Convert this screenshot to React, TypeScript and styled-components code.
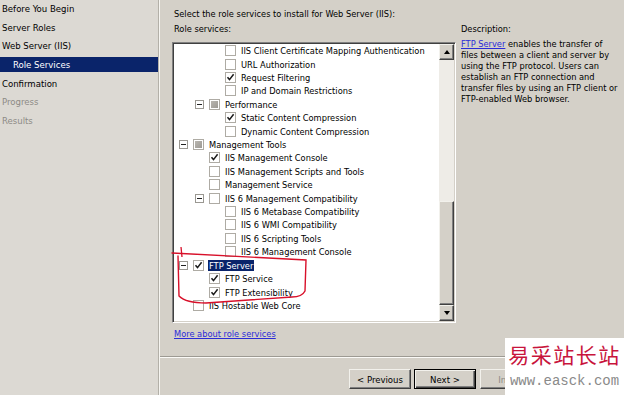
import React from "react";
import styled, { createGlobalStyle } from "styled-components";

// Add Role Services wizard page (classic Windows theme look)

const GlobalStyle = createGlobalStyle`
  html, body {
    margin: 0;
    padding: 0;
  }
  body {
    background: #d4d0c8;
    font-family: "DejaVu Sans Condensed", "Liberation Sans", sans-serif;
    font-size: 9.2px;
    color: #000;
  }
`;

const Wizard = styled.div`
  position: relative;
  width: 624px;
  height: 395px;
  display: flex;
  overflow: hidden;
  background: #d4d0c8;
`;

const Nav = styled.div`
  width: 158px;
  flex: none;
  padding-top: 1px;
  background: #dcd9d3;
  border-right: 1px solid #b3b0a8;
`;

const NavItem = styled.div<{ $sub?: boolean; $active?: boolean; $disabled?: boolean }>`
  height: 15px;
  line-height: 15px;
  margin-bottom: 3.7px;
  padding-left: ${(p) => (p.$sub ? 13 : 2)}px;
  font-size: 9.5px;
  white-space: nowrap;
  background: ${(p) => (p.$active ? "#0a246a" : "transparent")};
  color: ${(p) => (p.$active ? "#fff" : p.$disabled ? "#8d8b86" : "#000")};
`;

const Main = styled.div`
  flex: 1;
  display: flex;
  flex-direction: column;
  border-left: 1px solid #f6f5f1;
`;

const Body = styled.div`
  flex: 1;
  padding: 8px 0 0 12px;
`;

const Heading = styled.div`
  line-height: 12px;
  margin-left: 2px;
  white-space: nowrap;
`;

const Columns = styled.div`
  display: flex;
  margin-top: 3px;
`;

const LeftColumn = styled.div`
  width: 284px;
  flex: none;
`;

const RightColumn = styled.div`
  margin-left: 5px;
`;

const Label = styled.div<{ $indent?: number }>`
  line-height: 12px;
  margin-left: ${(p) => p.$indent ?? 0}px;
  white-space: nowrap;
`;

const ListBox = styled.div`
  margin-top: 7px;
  height: 281px;
  box-sizing: border-box;
  display: flex;
  padding: 1px;
  background: #fff;
  border: 1px solid;
  border-color: #808080 #ffffff #ffffff #808080;
  box-shadow: inset 1px 1px 0 #404040, inset -1px -1px 0 #d4d0c8;
`;

const Rows = styled.div`
  flex: 1;
  overflow: hidden;
`;

const Row = styled.div<{ $level: number }>`
  height: 13.42px;
  display: flex;
  align-items: center;
  padding-left: ${(p) => 5 + (p.$level - 1) * 16}px;
`;

const Expander = styled.span<{ $hidden?: boolean }>`
  position: relative;
  width: 9px;
  height: 9px;
  box-sizing: border-box;
  flex: none;
  margin-right: 5px;
  border: 1px solid #9a9892;
  background: #fff;
  visibility: ${(p) => (p.$hidden ? "hidden" : "visible")};
  &::after {
    content: "";
    position: absolute;
    left: 1px;
    top: 3px;
    width: 5px;
    height: 1px;
    background: #222;
  }
`;

const Box = styled.span<{ $mixed?: boolean }>`
  width: 11px;
  height: 11px;
  box-sizing: border-box;
  flex: none;
  margin-right: 4px;
  display: flex;
  align-items: center;
  justify-content: center;
  border: 1px solid #aeaba4;
  background: #fff;
  &::after {
    content: "";
    display: ${(p) => (p.$mixed ? "block" : "none")};
    width: 7px;
    height: 7px;
    background: linear-gradient(135deg, #b9b6b0, #9d9a94);
  }
`;

const ItemText = styled.span<{ $selected?: boolean }>`
  line-height: 11px;
  padding: 0 1px;
  white-space: nowrap;
  background: ${(p) => (p.$selected ? "#0a246a" : "transparent")};
  color: ${(p) => (p.$selected ? "#fff" : "#000")};
`;

const ScrollBar = styled.div`
  width: 15px;
  flex: none;
  display: flex;
  flex-direction: column;
  background: #eeece7;
`;

const Raised = styled.div`
  box-sizing: border-box;
  flex: none;
  background: #d4d0c8;
  border: 1px solid;
  border-color: #f2f1ec #404040 #404040 #f2f1ec;
  box-shadow: inset -1px -1px 0 #808080;
`;

const ScrollButton = styled(Raised)`
  height: 16px;
  display: flex;
  align-items: center;
  justify-content: center;
`;

const Arrow = styled.span<{ $down?: boolean }>`
  width: 0;
  height: 0;
  border-left: 3.5px solid transparent;
  border-right: 3.5px solid transparent;
  ${(p) => (p.$down ? "border-top: 4px solid #000;" : "border-bottom: 4px solid #000;")}
`;

const Track = styled.div`
  flex: 1;
`;

const Thumb = styled(Raised)`
  height: 104px;
`;

const Link = styled.a`
  color: #2b2bd8;
  text-decoration: underline;
  cursor: pointer;
`;

const MoreLink = styled(Link)`
  display: block;
  margin: 5px 0 0 2px;
  line-height: 12px;
  white-space: nowrap;
`;

const Description = styled.p`
  margin: 3px 0 0;
  line-height: 11px;
  white-space: nowrap;
`;

const Footer = styled.div`
  height: 39px;
  box-sizing: border-box;
  border-top: 1px solid #9d9a93;
  box-shadow: inset 0 1px 0 #fbfaf7;
  padding: 12px 0 0 189px;
  display: flex;
  align-items: flex-start;
`;

const Button = styled.div<{ $default?: boolean; $disabled?: boolean; $gap?: number }>`
  width: 62px;
  height: 20px;
  box-sizing: border-box;
  flex: none;
  margin-right: ${(p) => p.$gap ?? 3}px;
  display: flex;
  align-items: center;
  justify-content: center;
  font-size: 9.5px;
  background: #d4d0c8;
  color: ${(p) => (p.$disabled ? "#8d8b86" : "#000")};
  border: 1px solid;
  border-color: ${(p) => (p.$default ? "#000" : "#f2f1ec #404040 #404040 #f2f1ec")};
  box-shadow: ${(p) =>
    p.$default
      ? "inset 1px 1px 0 #f2f1ec, inset -1px -1px 0 #404040, inset -2px -2px 0 #808080"
      : "inset -1px -1px 0 #808080"};
`;

const Watermark = styled.div`
  position: absolute;
  right: 0;
  bottom: 0;
  width: 119px;
  height: 57px;
  background: #fff;
  display: flex;
  flex-direction: column;
  align-items: center;
`;

const WatermarkTitle = styled.div`
  margin-top: 3px;
  font-family: "Noto Sans CJK SC", sans-serif;
  font-size: 21px;
  line-height: 26px;
  letter-spacing: 1.5px;
  color: #c8143c;
`;

const WatermarkUrl = styled.div`
  margin-top: 7px;
  font-family: "Liberation Mono", monospace;
  font-size: 14px;
  line-height: 14px;
  color: #8a8a8a;
  white-space: nowrap;
`;

const Annotation = styled.svg`
  position: absolute;
  left: 0;
  top: 0;
  pointer-events: none;
`;

type Item = {
  level: number;
  text: string;
  state: "on" | "off" | "mixed";
  expander?: boolean;
  selected?: boolean;
};

const items: Item[] = [
  { level: 3, text: "IIS Client Certificate Mapping Authentication", state: "off" },
  { level: 3, text: "URL Authorization", state: "off" },
  { level: 3, text: "Request Filtering", state: "on" },
  { level: 3, text: "IP and Domain Restrictions", state: "off" },
  { level: 2, text: "Performance", state: "mixed", expander: true },
  { level: 3, text: "Static Content Compression", state: "on" },
  { level: 3, text: "Dynamic Content Compression", state: "off" },
  { level: 1, text: "Management Tools", state: "mixed", expander: true },
  { level: 2, text: "IIS Management Console", state: "on" },
  { level: 2, text: "IIS Management Scripts and Tools", state: "off" },
  { level: 2, text: "Management Service", state: "off" },
  { level: 2, text: "IIS 6 Management Compatibility", state: "off", expander: true },
  { level: 3, text: "IIS 6 Metabase Compatibility", state: "off" },
  { level: 3, text: "IIS 6 WMI Compatibility", state: "off" },
  { level: 3, text: "IIS 6 Scripting Tools", state: "off" },
  { level: 3, text: "IIS 6 Management Console", state: "off" },
  { level: 1, text: "FTP Server", state: "on", expander: true, selected: true },
  { level: 2, text: "FTP Service", state: "on" },
  { level: 2, text: "FTP Extensibility", state: "on" },
  { level: 1, text: "IIS Hostable Web Core", state: "off" },
];

const Check = () => (
  <svg width="9" height="9" viewBox="0 0 9 9">
    <path d="M1.5 4.2 L3.5 6.6 L7.6 1.2" fill="none" stroke="#1a1a1a" strokeWidth="1.5" />
  </svg>
);

export default function App() {
  return (
    <Wizard>
      <GlobalStyle />
      <Nav>
        <NavItem>Before You Begin</NavItem>
        <NavItem>Server Roles</NavItem>
        <NavItem>Web Server (IIS)</NavItem>
        <NavItem $sub $active>
          Role Services
        </NavItem>
        <NavItem>Confirmation</NavItem>
        <NavItem $disabled>Progress</NavItem>
        <NavItem $disabled>Results</NavItem>
      </Nav>
      <Main>
        <Body>
          <Heading>Select the role services to install for Web Server (IIS):</Heading>
          <Columns>
            <LeftColumn>
              <Label $indent={2}>Role services:</Label>
              <ListBox>
                <Rows>
                  {items.map((it) => (
                    <Row key={it.text} $level={it.level}>
                      <Expander $hidden={!it.expander} />
                      <Box $mixed={it.state === "mixed"}>{it.state === "on" && <Check />}</Box>
                      <ItemText $selected={it.selected}>{it.text}</ItemText>
                    </Row>
                  ))}
                </Rows>
                <ScrollBar>
                  <ScrollButton>
                    <Arrow />
                  </ScrollButton>
                  <Track />
                  <Thumb />
                  <ScrollButton>
                    <Arrow $down />
                  </ScrollButton>
                </ScrollBar>
              </ListBox>
              <MoreLink>More about role services</MoreLink>
            </LeftColumn>
            <RightColumn>
              <Label>Description:</Label>
              <Description>
                <Link>FTP Server</Link> enables the transfer of
                <br />
                files between a client and server by
                <br />
                using the FTP protocol. Users can
                <br />
                establish an FTP connection and
                <br />
                transfer files by using an FTP client or
                <br />
                FTP-enabled Web browser.
              </Description>
            </RightColumn>
          </Columns>
        </Body>
        <Footer>
          <Button>&lt; Previous</Button>
          <Button $default $gap={4}>
            Next &gt;
          </Button>
          <Button $disabled>Install</Button>
        </Footer>
      </Main>
      <Annotation width="624" height="395">
        <path
          d="M172 253 L306 260 L305 291 Q302 297 292 297 L206 303 Q186 303 179 296 L178 256"
          fill="none"
          stroke="#d8102a"
          strokeWidth="1.4"
          strokeLinecap="round"
        />
        <path d="M181 247 L182 257" fill="none" stroke="#d8102a" strokeWidth="1.3" />
      </Annotation>
      <Watermark>
        <WatermarkTitle>易采站长站</WatermarkTitle>
        <WatermarkUrl>www.easck.com</WatermarkUrl>
      </Watermark>
    </Wizard>
  );
}
